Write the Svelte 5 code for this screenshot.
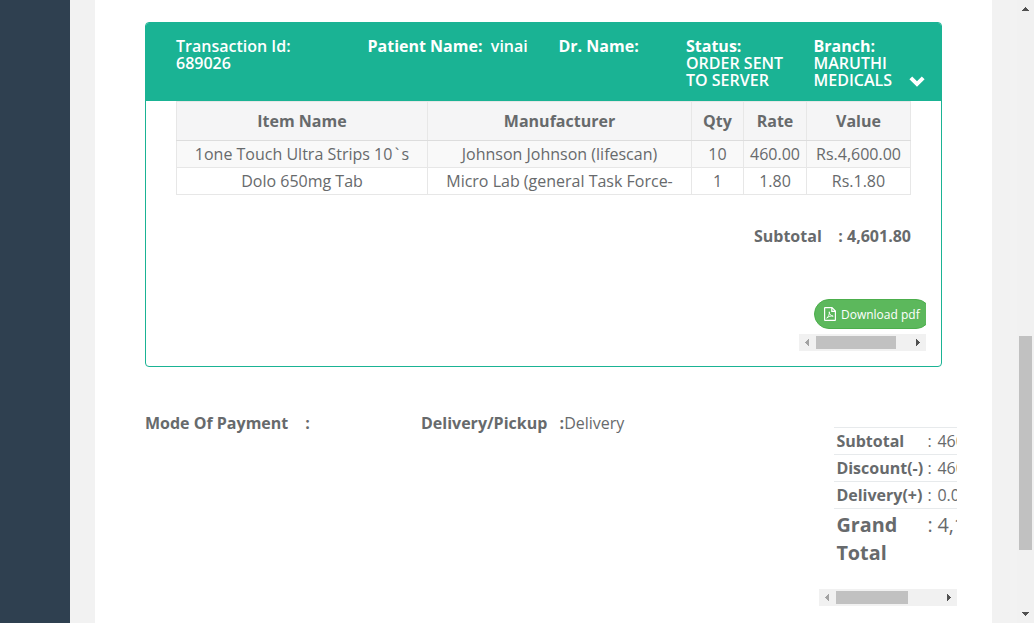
<script>
  const items = [
    ['1one Touch Ultra Strips 10`s', 'Johnson Johnson (lifescan)', '10', '460.00', 'Rs.4,600.00'],
    ['Dolo 650mg Tab', 'Micro Lab (general Task Force-', '1', '1.80', 'Rs.1.80']
  ];
  const totals = [
    ['Subtotal', '460.00'],
    ['Discount(-)', '460.00'],
    ['Delivery(+)', '0.00']
  ];
</script>

{#snippet hbar(kind)}
  <div class="hbar {kind}">
    <svg class="arrow" width="17" height="17" shape-rendering="crispEdges"><path d="M10 5v7L6 8.500z" fill="#a3a3a3" /></svg>
    <div class="thumb"></div>
    <svg class="arrow" width="17" height="17" shape-rendering="crispEdges"><path d="M7 5v7l4-3.500z" fill="#505050" /></svg>
  </div>
{/snippet}

<div class="page">
  <aside></aside>
  <main>
    <section class="card">
      <header>
        <div class="semi">Transaction Id:<br />689026</div>
        <div><b>Patient Name:</b>&nbsp; vinai</div>
        <div><b>Dr. Name:</b></div>
        <div><b>Status:</b><br />ORDER SENT<br />TO SERVER</div>
        <div><b>Branch:</b><br />MARUTHI<br />MEDICALS</div>
        <svg class="chevron" width="16" height="11" viewBox="0 0 16 11"><path d="M.4 3.300 3.200.500 8 5.200 12.800.500l2.800 2.800L8 10.800z" fill="#fff" /></svg>
      </header>
      <table>
        <colgroup><col class="c1" /><col class="c2" /><col class="c3" /><col class="c4" /><col class="c5" /></colgroup>
        <thead>
          <tr><th>Item Name</th><th>Manufacturer</th><th>Qty</th><th>Rate</th><th>Value</th></tr>
        </thead>
        <tbody>
          {#each items as row}
            <tr>
              {#each row as cell}
                {@const parts = cell.split('`')}
                <td>{parts[0]}{#if parts.length > 1}<span class="tick">`</span>{parts[1]}{/if}</td>
              {/each}
            </tr>
          {/each}
        </tbody>
      </table>
      <div class="subtotal"><span>Subtotal</span><span>: 4,601.80</span></div>
      <div class="download">
        <div class="clip">
          <button>
            <svg width="12" height="14" viewBox="0 0 12 14" fill="none" stroke="#fff"><path d="M.6 1.100Q.6.600 1.100.600H8l3.400 3.400v8.900q0 .500-.5.500H1.100q-.5 0-.5-.5zM7.800.800v3.500h3.400" stroke-width="1.200" /><path d="M5.300 4.800c-.2 2 .9 3.600 3.900 4.400-2.300-.5-4.500.1-6.500 2 1.800-1.500 3-4.100 2.600-6.400" stroke-width=".9" /></svg>
            Download pdf
          </button>
        </div>
        {@render hbar('first')}
      </div>
    </section>
    <section class="summary">
      <div class="line"><b>Mode Of Payment</b><b>:</b></div>
      <div class="line pickup"><b>Delivery/Pickup</b><span><b>:</b>Delivery</span></div>
      <div class="totals">
        <div class="rows">
          {#each totals as [label, value]}
            <div class="row"><b>{label}</b><span>:</span><span>{value}</span></div>
          {/each}
          <div class="row grand"><b>Grand Total</b><span>:</span><span>4,141.80</span></div>
        </div>
        {@render hbar('second')}
      </div>
    </section>
  </main>
  <div class="vbar">
    <svg width="17" height="17" shape-rendering="crispEdges"><path d="M5 11h7L8.500 7z" fill="#505050" /></svg>
    <div class="vthumb"></div>
    <svg class="down" width="17" height="17" shape-rendering="crispEdges"><path d="M5 6h7l-3.500 4z" fill="#505050" /></svg>
  </div>
</div>

<style>
  :global(body) { margin: 0; overflow: hidden; }
  .page {
    display: grid;
    grid-template-columns: 70px 947px 17px;
    height: 623px;
    overflow: hidden;
    background: #f2f2f2;
    color: #676a6c;
    font: 16px/26px "Open Sans", sans-serif;
  }
  b { font-weight: 700; }
  aside { background: #2f4050; }
  main {
    box-sizing: border-box;
    width: 897px;
    margin-left: 25px;
    padding: 22px 0 0 50px;
    background: #fff;
    overflow: hidden;
  }
  .card {
    box-sizing: border-box;
    width: 797px;
    height: 345px;
    border: 1px solid #1ab394;
    border-radius: 4px;
    overflow: hidden;
  }
  header {
    box-sizing: border-box;
    display: grid;
    grid-template-columns: 191.500px 191px 127.500px 127.500px 95.500px 17px;
    height: 78px;
    padding: 15px 0 0 30px;
    background: #1ab394;
    color: #fff;
    font-weight: 600;
    line-height: 17px;
    white-space: nowrap;
  }
  .chevron { margin: 38px 0 0 0; }
  table {
    width: 735px;
    margin-left: 30px;
    border-collapse: collapse;
    table-layout: fixed;
    text-align: center;
    white-space: nowrap;
  }
  .c1 { width: 251px; }
  .c2 { width: 264px; }
  .c3 { width: 52px; }
  .c4 { width: 63px; }
  .c5 { width: 104px; }
  th, td { padding: 0; border: 1px solid #e7e7e7; height: 26px; }
  th { height: 38px; background: #f5f5f6; border-bottom-color: #ddd; }
  tbody tr:first-child { background: #f9f9f9; }
  .tick { display: inline-block; width: 9.200px; text-align: center; }
  .subtotal {
    display: flex;
    justify-content: flex-end;
    gap: 16.500px;
    margin: 28px 30px 0 0;
    font-weight: 700;
  }
  .download { width: 127px; margin: 50px 0 0 653px; }
  .clip { overflow: hidden; padding-left: 15px; }
  button {
    display: flex;
    align-items: center;
    gap: 5px;
    box-sizing: border-box;
    width: 117px;
    height: 30px;
    padding: 0 9px;
    border: 1px solid #4cae4c;
    border-radius: 15px;
    background: #5cb85c;
    color: #fff;
    font: 12px "Open Sans", sans-serif;
    white-space: nowrap;
  }
  button svg { flex: none; }
  .hbar { display: flex; align-items: center; height: 17px; background: #f1f1f1; }
  .hbar .thumb { height: 13px; background: #c1c1c1; }
  .arrow { flex: none; }
  .arrow:last-child { margin-left: auto; }
  .first { margin-top: 5px; }
  .first .thumb { width: 80px; }
  .second { margin-top: 21px; }
  .second .thumb { width: 72px; }
  .summary {
    display: grid;
    grid-template-columns: 276px 398px 138px;
    padding-top: 43px;
    white-space: nowrap;
  }
  .line { display: flex; gap: 17px; }
  .pickup { gap: 12.300px; }
  .totals { margin-top: 17px; }
  .rows { margin-left: 15px; overflow: hidden; }
  .row {
    display: grid;
    grid-template-columns: 91px 10px 90px;
    height: 26px;
    padding-left: 2.400px;
    border-top: 1px solid #e7eaec;
  }
  .grand { height: 57px; padding-top: 2px; box-sizing: content-box; font-size: 19.800px; line-height: 28px; }
  .grand b { white-space: normal; width: 80px; }
  .vbar { background: #f1f1f1; display: flex; flex-direction: column; }
  .vthumb { width: 13px; height: 214px; margin: 319px 0 0 2px; background: #c1c1c1; }
  .down { margin-top: auto; }
</style>
